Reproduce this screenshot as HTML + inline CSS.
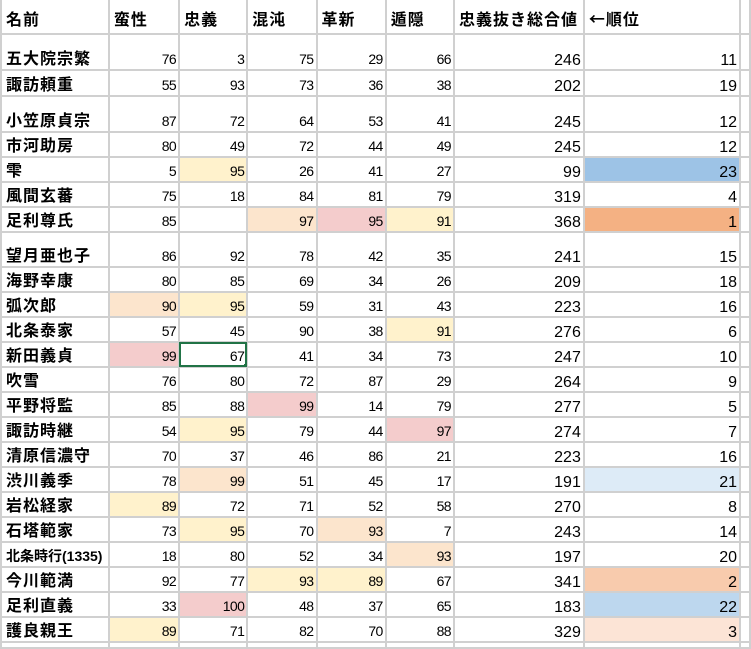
<!DOCTYPE html>
<html><head><meta charset="utf-8">
<style>
html,body{margin:0;padding:0;background:#fff;width:751px;height:649px;overflow:hidden}
table{border-collapse:collapse;table-layout:fixed;position:absolute;left:0;top:0}
td{border:2px solid #d0d0d0;padding:0 2px 2px 2px;vertical-align:bottom;text-align:right;font:14px/15px "Liberation Sans",Arial,sans-serif;letter-spacing:-0.6px;color:#000;overflow:hidden;white-space:nowrap;box-sizing:border-box}
td.n{text-align:left;font:bold 16px/17px "Liberation Sans","Noto Sans CJK JP",sans-serif;letter-spacing:1px;padding-left:4px;padding-bottom:1px}
td.b{font-size:16px;letter-spacing:0;padding-bottom:1px}
tr.h td{border-top:none;text-align:left;font:bold 16px/17px "Liberation Sans","Noto Sans CJK JP",sans-serif;letter-spacing:1px;padding-left:4px;padding-bottom:4px}
.ar{font-family:"Noto Sans CJK JP",sans-serif}
.y{background:#fff2cc}.p{background:#fce5cd}.k{background:#f4cccc}
.o1{background:#f4b183}.o2{background:#f8cbad}.o3{background:#fce4d6}
.b23{background:#9dc3e6}.b22{background:#bdd7ee}.b21{background:#ddebf7}
.sel{outline:2px solid #217346;outline-offset:-2px;position:relative}
.sel:after{content:"";position:absolute;right:-3px;bottom:-3px;width:5px;height:5px;background:#217346}
</style></head><body>
<table>
<colgroup><col style="width:108px"><col style="width:71px"><col style="width:69px"><col style="width:70px"><col style="width:70px"><col style="width:69px"><col style="width:130px"><col style="width:159px"><col style="width:10px"></colgroup>
<tr class="h" style="height:34px"><td>名前</td><td>蛮性</td><td>忠義</td><td>混沌</td><td>革新</td><td>遁隠</td><td>忠義抜き総合値</td><td><span class="ar">←</span>順位</td><td></td></tr>
<tr style="height:36px"><td class="n">五大院宗繁</td><td>76</td><td>3</td><td>75</td><td>29</td><td>66</td><td class="b">246</td><td class="b">11</td><td></td></tr>
<tr style="height:26px"><td class="n">諏訪頼重</td><td>55</td><td>93</td><td>73</td><td>36</td><td>38</td><td class="b">202</td><td class="b">19</td><td></td></tr>
<tr style="height:36px"><td class="n">小笠原貞宗</td><td>87</td><td>72</td><td>64</td><td>53</td><td>41</td><td class="b">245</td><td class="b">12</td><td></td></tr>
<tr style="height:25px"><td class="n">市河助房</td><td>80</td><td>49</td><td>72</td><td>44</td><td>49</td><td class="b">245</td><td class="b">12</td><td></td></tr>
<tr style="height:25px"><td class="n">雫</td><td>5</td><td class="y">95</td><td>26</td><td>41</td><td>27</td><td class="b">99</td><td class="b b23">23</td><td></td></tr>
<tr style="height:25px"><td class="n">風間玄蕃</td><td>75</td><td>18</td><td>84</td><td>81</td><td>79</td><td class="b">319</td><td class="b">4</td><td></td></tr>
<tr style="height:25px"><td class="n">足利尊氏</td><td>85</td><td></td><td class="p">97</td><td class="k">95</td><td class="y">91</td><td class="b">368</td><td class="b o1">1</td><td></td></tr>
<tr style="height:35px"><td class="n">望月亜也子</td><td>86</td><td>92</td><td>78</td><td>42</td><td>35</td><td class="b">241</td><td class="b">15</td><td></td></tr>
<tr style="height:25px"><td class="n">海野幸康</td><td>80</td><td>85</td><td>69</td><td>34</td><td>26</td><td class="b">209</td><td class="b">18</td><td></td></tr>
<tr style="height:25px"><td class="n">弧次郎</td><td class="p">90</td><td class="y">95</td><td>59</td><td>31</td><td>43</td><td class="b">223</td><td class="b">16</td><td></td></tr>
<tr style="height:25px"><td class="n">北条泰家</td><td>57</td><td>45</td><td>90</td><td>38</td><td class="y">91</td><td class="b">276</td><td class="b">6</td><td></td></tr>
<tr style="height:25px"><td class="n">新田義貞</td><td class="k">99</td><td class="sel">67</td><td>41</td><td>34</td><td>73</td><td class="b">247</td><td class="b">10</td><td></td></tr>
<tr style="height:25px"><td class="n">吹雪</td><td>76</td><td>80</td><td>72</td><td>87</td><td>29</td><td class="b">264</td><td class="b">9</td><td></td></tr>
<tr style="height:25px"><td class="n">平野将監</td><td>85</td><td>88</td><td class="k">99</td><td>14</td><td>79</td><td class="b">277</td><td class="b">5</td><td></td></tr>
<tr style="height:25px"><td class="n">諏訪時継</td><td>54</td><td class="y">95</td><td>79</td><td>44</td><td class="k">97</td><td class="b">274</td><td class="b">7</td><td></td></tr>
<tr style="height:25px"><td class="n">清原信濃守</td><td>70</td><td>37</td><td>46</td><td>86</td><td>21</td><td class="b">223</td><td class="b">16</td><td></td></tr>
<tr style="height:25px"><td class="n">渋川義季</td><td>78</td><td class="p">99</td><td>51</td><td>45</td><td>17</td><td class="b">191</td><td class="b b21">21</td><td></td></tr>
<tr style="height:25px"><td class="n">岩松経家</td><td class="y">89</td><td>72</td><td>71</td><td>52</td><td>58</td><td class="b">270</td><td class="b">8</td><td></td></tr>
<tr style="height:25px"><td class="n">石塔範家</td><td>73</td><td class="y">95</td><td>70</td><td class="p">93</td><td>7</td><td class="b">243</td><td class="b">14</td><td></td></tr>
<tr style="height:25px"><td class="n" style="font-size:14px;letter-spacing:0">北条時行(1335)</td><td>18</td><td>80</td><td>52</td><td>34</td><td class="p">93</td><td class="b">197</td><td class="b">20</td><td></td></tr>
<tr style="height:25px"><td class="n">今川範満</td><td>92</td><td>77</td><td class="y">93</td><td class="y">89</td><td>67</td><td class="b">341</td><td class="b o2">2</td><td></td></tr>
<tr style="height:25px"><td class="n">足利直義</td><td>33</td><td class="k">100</td><td>48</td><td>37</td><td>65</td><td class="b">183</td><td class="b b22">22</td><td></td></tr>
<tr style="height:25px"><td class="n">護良親王</td><td class="y">89</td><td>71</td><td>82</td><td>70</td><td>88</td><td class="b">329</td><td class="b o3">3</td><td></td></tr>
<tr style="height:6px"><td></td><td></td><td></td><td></td><td></td><td></td><td></td><td></td><td></td></tr>
</table>
</body></html>
